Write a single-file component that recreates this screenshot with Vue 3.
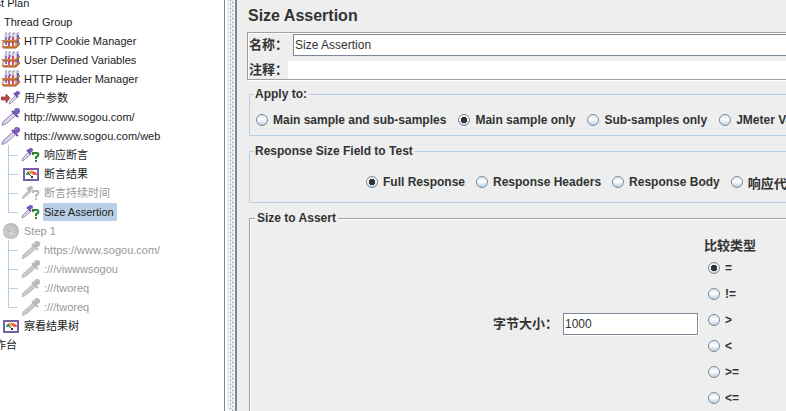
<script setup>
import { ref } from 'vue'

const nodes = [
  { depth: 0, label: 'Test Plan', icon: '' },
  { depth: 1, label: 'Thread Group', icon: '' },
  { depth: 2, label: 'HTTP Cookie Manager', icon: 'rack' },
  { depth: 2, label: 'User Defined Variables', icon: 'rack' },
  { depth: 2, label: 'HTTP Header Manager', icon: 'rack' },
  { depth: 2, label: '用户参数', icon: 'param' },
  { depth: 2, label: 'http://www.sogou.com/', icon: 'dropper' },
  { depth: 2, label: 'https://www.sogou.com/web', icon: 'dropper' },
  { depth: 3, label: '响应断言', icon: 'assert' },
  { depth: 3, label: '断言结果', icon: 'gauge' },
  { depth: 3, label: '断言持续时间', icon: 'assert', disabled: true },
  { depth: 3, label: 'Size Assertion', icon: 'assert', selected: true, last: true },
  { depth: 2, label: 'Step 1', icon: 'disc', disabled: true },
  { depth: 3, label: 'https://www.sogou.com/', icon: 'dropper', disabled: true },
  { depth: 3, label: ':///viwwwsogou', icon: 'dropper', disabled: true },
  { depth: 3, label: ':///tworeq', icon: 'dropper', disabled: true },
  { depth: 3, label: ':///tworeq', icon: 'dropper', disabled: true, last: true },
  { depth: 2, label: '察看结果树', icon: 'gauge' },
  { depth: 0, label: '工作台', icon: '' },
]

const scopes = ['Main sample and sub-samples', 'Main sample only', 'Sub-samples only', 'JMeter Variable']
const fields = ['Full Response', 'Response Headers', 'Response Body', '响应代码']
const operators = ['=', '!=', '>', '<', '>=', '<=']

const name = ref('Size Assertion')
const comment = ref('')
const scope = ref('Main sample only')
const field = ref('Full Response')
const operator = ref('=')
const size = ref('1000')
</script>

<template>
  <div class="window">
    <nav class="tree-pane">
      <ul class="tree">
        <li
          v-for="(n, i) in nodes"
          :key="i"
          class="node"
          :class="{ child: n.depth === 3, last: n.last, disabled: n.disabled, selected: n.selected }"
          :style="{ paddingLeft: n.depth * 20 + 1 + 'px' }"
        >
          <svg class="icon" viewBox="0 -1 20 19" aria-hidden="true">
            <g v-if="n.icon === 'rack'">
              <path d="M4 1h14v11H3V4z" fill="#e9e7f1" />
              <g fill="none" stroke-width="2">
                <path d="M5 2v11M8 1v12M12 1v12M16 1v11" stroke="#c3bfd8" />
                <path d="M5 5v8M9 4v2" stroke="#8a76c4" />
                <path d="M8 6v8M12 5v9" stroke="#dc4a6c" />
                <path d="M17 3v9" stroke="#5a60bd" />
              </g>
              <path d="M4 1h2M8 1h2M12 1h2M16 1h2" stroke="#8f8ba4" />
              <path d="M0 8h14l5-3v1l-4 4H2z" fill="#d0823f" />
              <path d="M0 14h14l5-4v2l-4 4H2z" fill="#d0823f" />
              <path d="M2 10h13l4-4M2 16h13l4-4" fill="none" stroke="#99592f" />
              <path d="M2 10v4M15 10v6" stroke="#b46d36" />
            </g>
            <g v-else-if="n.icon === 'dropper'">
              <path d="m1 18 1-4 10-9 3 3-9 8-4 2z" :fill="n.disabled ? '#cacaca' : '#dcd8e6'" />
              <path d="m1 18 1-4L12 5" fill="none" :stroke="n.disabled ? '#bdbdbd' : '#8b74b8'" />
              <path d="m2 17 4-2 8-7" fill="none" :stroke="n.disabled ? '#c0c0c0' : '#a39ab8'" />
              <path d="m11 3 6 6" fill="none" :stroke="n.disabled ? '#b8b8b8' : '#6f4cab'" stroke-width="2" />
              <path d="m13 6 3-3" :stroke="n.disabled ? '#b8b8b8' : '#7452ad'" stroke-width="4" />
              <circle cx="16" cy="3" r="3" :fill="n.disabled ? '#b8b8b8' : '#7a5ab6'" />
              <path d="m14 3 2-2" :stroke="n.disabled ? '#ccc' : '#a78ed4'" />
            </g>
            <g v-else-if="n.icon === 'param'">
              <path d="M0 8h5V5l4 4-4 5v-3H0z" fill="#b94950" stroke="#823943" stroke-width=".7" />
              <path d="m8 15 1-3 6-6 2 2-7 6z" fill="#dcd8e6" stroke="#8f84a8" stroke-width=".8" />
              <path d="m13 4 4 4" stroke="#6f4cab" stroke-width="2" />
              <path d="m14 6 3-3" stroke="#7452ad" stroke-width="3" />
              <circle cx="17" cy="4" r="2" fill="#7a5ab6" />
            </g>
            <g v-else-if="n.icon === 'assert'">
              <path d="m1 15 1-3 6-6 2 2-7 6z" :fill="n.disabled ? '#cacaca' : '#dcd8e6'" :stroke="n.disabled ? '#bbb' : '#8579a0'" stroke-width=".8" />
              <path d="m6 4 4 4" :stroke="n.disabled ? '#b8b8b8' : '#6f4cab'" stroke-width="2" />
              <path d="m7 6 3-3" :stroke="n.disabled ? '#b8b8b8' : '#7452ad'" stroke-width="3" />
              <circle cx="10" cy="4" r="2" :fill="n.disabled ? '#b8b8b8' : '#7a5ab6'" />
              <path d="M12 9V7h4q2 0 1 3l-2 1v2" fill="none" :stroke="n.disabled ? '#bbb' : '#2f852f'" stroke-width="2" />
              <path d="M14 14h2v2h-2z" :fill="n.disabled ? '#bbb' : '#2f852f'" />
            </g>
            <g v-else-if="n.icon === 'gauge'">
              <path d="M3 4h14v11H3z" fill="#fff" stroke="#7761a6" stroke-width="2" />
              <path d="M5 10q0-3 3-4l1 2-2 2z" fill="#38a866" />
              <path d="M7 6q3-1 6 0l-2 3H9z" fill="#e8a349" />
              <path d="M12 6q4 1 4 4h-3l-2-1z" fill="#e96049" />
              <path d="m7 8 4 4" stroke="#333" />
              <path d="M10 11h2v2h-2z" fill="#333" />
            </g>
            <g v-else-if="n.icon === 'disc'">
              <circle cx="10" cy="9" r="8" fill="#b9b9b9" />
              <circle cx="9" cy="10" r="7" fill="#c9c9c9" />
              <circle cx="9" cy="10" r="5" fill="none" stroke="#b2b2b2" stroke-dasharray="1 3" />
              <path d="m6 7 4 4" stroke="#aaa" />
              <circle cx="10" cy="11" r="1" fill="#e4e4e4" />
            </g>
          </svg>
          <span class="node-label">{{ n.label }}</span>
        </li>
      </ul>
    </nav>

    <div class="divider"><div class="bumps"></div></div>

    <main class="editor">
      <form class="form" @submit.prevent>
        <h1>Size Assertion</h1>

        <div class="name-panel">
          <div class="line">
            <label for="name">名称：</label>
            <input id="name" v-model="name" class="text name-input" type="text" />
          </div>
          <div class="line">
            <label for="comment">注释：</label>
            <input id="comment" v-model="comment" class="comment-input" type="text" />
          </div>
        </div>

        <fieldset class="apply">
          <legend>Apply to:</legend>
          <div class="radios">
            <label v-for="s in scopes" :key="s" class="radio">
              <input v-model="scope" type="radio" name="scope" :value="s" />{{ s }}
            </label>
          </div>
        </fieldset>

        <fieldset class="response">
          <legend>Response Size Field to Test</legend>
          <div class="radios">
            <label v-for="f in fields" :key="f" class="radio" :class="{ cjk: f === '响应代码' }">
              <input v-model="field" type="radio" name="field" :value="f" />{{ f }}
            </label>
          </div>
        </fieldset>

        <fieldset class="etched">
          <legend>Size to Assert</legend>
          <div class="size-body">
            <div class="line">
              <label for="size">字节大小：</label>
              <input id="size" v-model="size" class="text size-input" type="text" />
            </div>
            <div class="operators">
              <div class="caption">比较类型</div>
              <label v-for="o in operators" :key="o" class="radio">
                <input v-model="operator" type="radio" name="operator" :value="o" />{{ o }}
              </label>
            </div>
          </div>
        </fieldset>
      </form>
    </main>
  </div>
</template>

<style>
body {
  margin: 0;
  background: #eee;
}
</style>

<style scoped>
.window {
  display: flex;
  height: 100vh;
  overflow: hidden;
  background: #eee;
  color: #333;
  font: bold 12px "Liberation Sans", Arial, "Noto Sans CJK SC", sans-serif;
}

/* tree */
.tree-pane {
  flex: none;
  width: 224px;
  overflow: hidden;
  background: #fff;
  border-right: 1px solid #7a8a99;
}
/* scrolled a little to the right and down */
.tree {
  margin: -7px 0 0 -40px;
  padding: 0;
  list-style: none;
  font-size: 11px;
  font-weight: normal;
  color: #222;
}
.node {
  position: relative;
  display: flex;
  align-items: center;
  gap: 2px;
  height: 19px;
  white-space: nowrap;
}
.icon {
  flex: none;
  width: 20px;
  height: 19px;
}
.node-label {
  padding: 0 3px 0 1px;
  line-height: 18px;
}
.disabled {
  color: #999;
}
.selected .node-label {
  background: #b8cfe5;
}
.child::before,
.child::after {
  content: "";
  position: absolute;
  left: 48px;
  top: 0;
  background: #b8cfe5;
}
.child::before {
  width: 1px;
  height: 19px;
}
.child.last::before {
  height: 10px;
}
.child::after {
  top: 10px;
  width: 10px;
  height: 1px;
}

/* split pane divider */
.divider {
  flex: none;
  display: flex;
  box-sizing: border-box;
  width: 10px;
  margin-left: 2px;
  padding-left: 3px;
  border-right: 2px solid #7a8a99;
  box-shadow: -2px 0 #fff;
}
.bumps {
  width: 4px;
  background:
    linear-gradient(#7a8a99 1px, transparent 1px) 0 0 / 1px 4px repeat-y,
    linear-gradient(#7a8a99 1px, transparent 1px) 2px 2px / 1px 4px repeat-y;
}

/* editor */
.editor {
  flex: 1;
  min-width: 0;
  overflow: hidden;
}
.form {
  min-width: 640px;
  padding: 6px 0 0 10px;
}
h1 {
  margin: 0 0 6px 1px;
  font-size: 16px;
  line-height: 20px;
}
.name-panel {
  display: flex;
  flex-direction: column;
  gap: 5px;
  padding: 1px 0 0 1px;
  border: 1px solid #a0a0a0;
  box-shadow: inset 1px 1px #fff, 0 1px #fff;
}
.line {
  display: flex;
  align-items: center;
}
.line label,
.caption {
  flex: none;
  font-size: 13px;
  line-height: 18px;
}
input[type="text"] {
  box-sizing: border-box;
  margin: 0;
  padding: 0 2px;
  border: 0;
  outline: 0;
  background: #fff;
  color: #333;
  font: 12px "Liberation Sans", Arial, sans-serif;
}
input.text {
  height: 22px;
  margin-left: 5px;
  padding: 0 1px;
  border: 1px solid #7a8a99;
}
.name-input {
  flex: 1;
}
.comment-input {
  flex: 1;
  height: 18px;
}
.size-input {
  width: 135px;
  box-shadow: 1px 1px #fff;
}

fieldset {
  min-width: 0;
  margin: 0 0 0 2px;
  border: 1px solid #b8cfe5;
}
legend {
  padding: 0 1px;
  line-height: 16px;
  background: #eee;
}
.apply {
  margin-top: 6px;
  padding: 8px 4px 5px;
}
.apply .radios {
  padding-left: 2px;
}
.response {
  margin-top: 7px;
  padding: 13px 4px 10px;
}
.response .radios {
  gap: 11px;
  padding-left: 112px;
}
.etched {
  margin-top: 7px;
  padding: 11px 5px 40px;
  border-color: #a0a0a0;
  box-shadow: inset 1px 1px #fff;
}
.etched legend {
  padding: 0 2px;
}
.radios {
  display: flex;
  gap: 12px;
}
.radio {
  display: flex;
  align-items: center;
  gap: 5px;
  height: 20px;
  white-space: nowrap;
}
.cjk {
  font-size: 13px;
}
.radio input {
  appearance: none;
  box-sizing: border-box;
  width: 12px;
  height: 12px;
  margin: 0;
  border: 1px solid #7a8a99;
  border-radius: 50%;
  background: linear-gradient(#dde8f3, #fff 45%, #b8cfe5);
}
.radio input:checked {
  background: radial-gradient(circle, #333 3px, transparent 3px), linear-gradient(#dde8f3, #fff 45%, #b8cfe5);
}
.size-body {
  display: flex;
  align-items: center;
  gap: 6px;
  padding-left: 238px;
}
.operators .radio {
  height: 26px;
  padding-left: 4px;
}
</style>
